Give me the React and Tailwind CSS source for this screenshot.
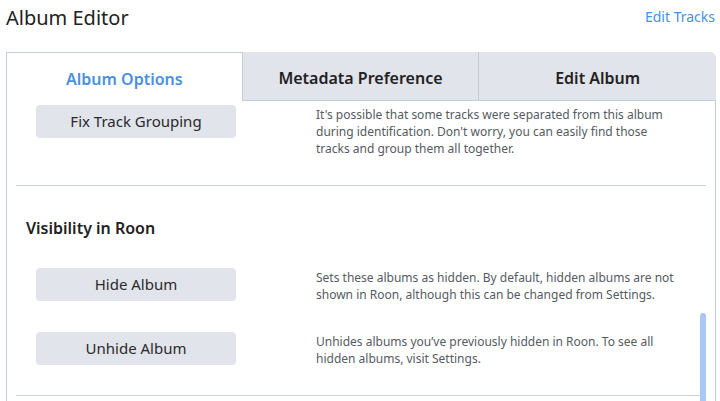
import React from "react";

const tabs = ["Album Options", "Metadata Preference", "Edit Album"];

function OptionRow({ label, children, className = "" }) {
  return (
    <div className={`flex items-start pl-[29px] ${className}`}>
      <button className="w-[200px] h-[33px] shrink-0 rounded-[4px] bg-[#e1e4eb] text-[15px] font-normal text-[#2a2a2a]">
        {label}
      </button>
      <p className="ml-[80px] w-[360px] text-[12px] leading-[17px] text-[#555b63] pt-[1px]">
        {children}
      </p>
    </div>
  );
}

function App() {
  const active = 0;
  return (
    <div
      className="w-[720px] h-[401px] overflow-hidden bg-white flex flex-col"
      style={{ fontFamily: '"Noto Sans", "Open Sans", sans-serif' }}
    >
      {/* header */}
      <div className="h-[52px] shrink-0 flex justify-between px-[6px] pr-[5px]">
        <h1 className="text-[20px] leading-[26px] pt-[5px] text-[#222]">Album Editor</h1>
        <a className="text-[14px] leading-[18px] pt-[8px] text-[#4a90e2] cursor-pointer">Edit Tracks</a>
      </div>

      {/* panel */}
      <div className="flex-1 min-h-0 ml-[6px] mr-[4px] flex flex-col">
        <div className="grid grid-cols-3 h-[49px] shrink-0">
          {tabs.map((t, i) => (
            <div
              key={t}
              className={
                "flex items-center justify-center pt-[3px] text-[16px] font-semibold " +
                (i === active
                  ? "bg-white text-[#4a90e2] border-l border-t border-r border-[#c5cdd9]"
                  : "bg-[#e1e4eb] text-[#222] border-b border-[#c5cdd9] " +
                    (i === tabs.length - 1 ? "rounded-tr-[6px]" : "border-r"))
              }
            >
              {t}
            </div>
          ))}
        </div>

        <div className="relative flex-1 min-h-0 overflow-hidden border-l border-r border-[#c5cdd9]">
          <OptionRow label="Fix Track Grouping" className="mt-[4px]">
            It's possible that some tracks were separated from this album during identification. Don't worry, you can easily find those tracks and group them all together.
          </OptionRow>

          <div className="mx-[9px] mt-[28px] border-t border-[#ccd2db]" />

          <h2 className="pl-[19px] mt-[31px] text-[16px] leading-[22px] font-semibold text-[#222]">
            Visibility in Roon
          </h2>

          <OptionRow label="Hide Album" className="mt-[29px]">
            Sets these albums as hidden. By default, hidden albums are not shown in Roon, although this can be changed from Settings.
          </OptionRow>

          <OptionRow label="Unhide Album" className="mt-[29px]">
            Unhides albums you’ve previously hidden in Roon. To see all hidden albums, visit Settings.
          </OptionRow>

          <div className="mx-[9px] mt-[28px] border-t border-[#ccd2db]" />

          {/* scrollbar thumb */}
          <div className="absolute right-[9px] top-[212px] w-[6px] h-[120px] rounded-[3px] bg-[#a6c8f2]" />
        </div>
      </div>
    </div>
  );
}

export default App;
